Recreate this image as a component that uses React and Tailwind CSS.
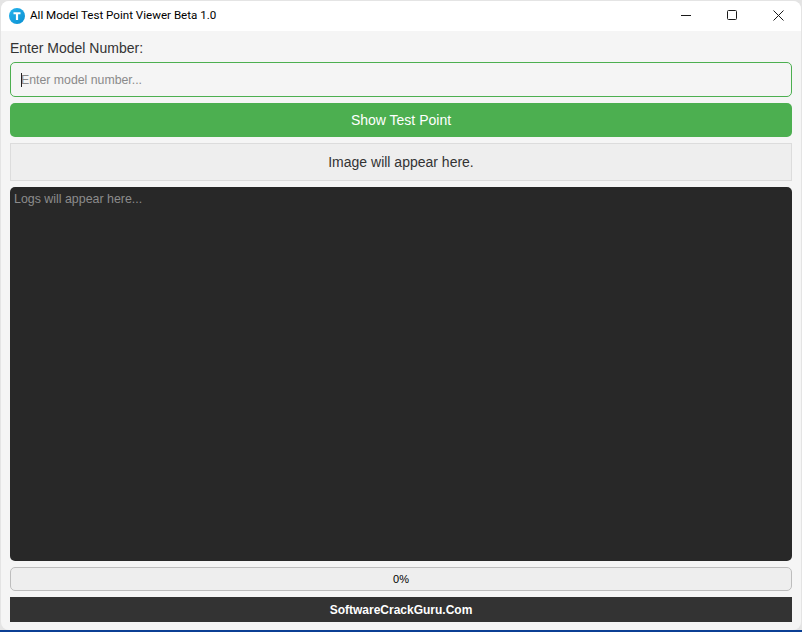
const AppIcon = () => (
  <svg width="16" height="16" viewBox="0 0 16 16" className="shrink-0">
    <defs>
      <linearGradient id="iconBlue" x1="0" y1="0" x2="1" y2="1">
        <stop offset="0" stopColor="#27b4ee" />
        <stop offset="1" stopColor="#0a8fd0" />
      </linearGradient>
    </defs>
    <circle cx="8" cy="8" r="8" fill="url(#iconBlue)" />
    <path d="M4.5 4.2h7v2.1H9.1v5.7H6.9V6.3H4.5z" fill="#fff" />
  </svg>
);

const WindowButtons = () => (
  <div className="flex items-center pb-[2px] text-[#1a1a1a]">
    <div className="flex h-7 w-[46px] items-center justify-center">
      <svg width="10" height="10" viewBox="0 0 10 10" fill="none" stroke="currentColor">
        <path d="M0 5.5h10" />
      </svg>
    </div>
    <div className="flex h-7 w-[46px] items-center justify-center">
      <svg width="10" height="10" viewBox="0 0 10 10" fill="none" stroke="currentColor">
        <rect x="0.5" y="0.5" width="9" height="9" rx="1" />
      </svg>
    </div>
    <div className="flex h-7 w-[46px] items-center justify-center">
      <svg width="11" height="11" viewBox="0 0 11 11" fill="none" stroke="currentColor">
        <path d="M0.5 0.5l10 10M10.5 0.5l-10 10" />
      </svg>
    </div>
  </div>
);

export default function App() {
  return (
    <div className="h-[632px] w-[802px] overflow-hidden bg-[linear-gradient(to_top,#0b3f94_0,#0b3f94_2px,#e4e4e4_2px)] pb-[2px] pl-px pr-px pt-px font-['Liberation_Sans',Arial,sans-serif]">
      <div className="flex h-full flex-col overflow-hidden rounded-lg bg-[#f5f5f5]">
        {/* Title bar */}
        <div className="flex h-[30px] shrink-0 items-center justify-between bg-white pl-2">
          <div className="flex items-center gap-[5px]">
            <AppIcon />
            <span className="font-['Roboto',sans-serif] text-[11.6px] text-black">
              All Model Test Point Viewer Beta 1.0
            </span>
          </div>
          <WindowButtons />
        </div>

        {/* Content */}
        <div className="flex flex-1 flex-col gap-[6px] px-[9px] pb-2 pt-[9px]">
          <label className="text-[14px] leading-[16px] text-[#333]">Enter Model Number:</label>

          <div className="relative">
            <input
              readOnly
              placeholder="Enter model number..."
              className="h-[35px] w-full rounded-[5px] border border-[#4caf50] bg-[#f5f5f5] px-[10px] text-[12.3px] text-[#333] outline-none placeholder:text-[#8a8a8a]"
            />
            <span className="absolute left-[11px] top-[11px] h-[14px] w-px bg-[#222]" />
          </div>

          <button className="h-[34px] rounded-[5px] bg-[#4caf50] text-[14px] text-white">
            Show Test Point
          </button>

          <div className="flex h-[38px] items-center justify-center border border-[#dcdcdc] bg-[#eeeeee] text-[14px] text-[#333]">
            Image will appear here.
          </div>

          <div className="min-h-0 flex-1 rounded-[5px] bg-[#282828] px-1 py-[5px] text-[12.4px] leading-[14px] text-[#8c8c8c]">
            Logs will appear here...
          </div>

          <div className="flex h-6 items-center justify-center rounded-[5px] border border-[#bdbdbd] bg-[#eeeeee] text-[11px] text-black">
            0%
          </div>

          <div className="flex h-[25px] items-center justify-center bg-[#333333] text-xs font-bold text-white">
            SoftwareCrackGuru.Com
          </div>
        </div>
      </div>
    </div>
  );
}
